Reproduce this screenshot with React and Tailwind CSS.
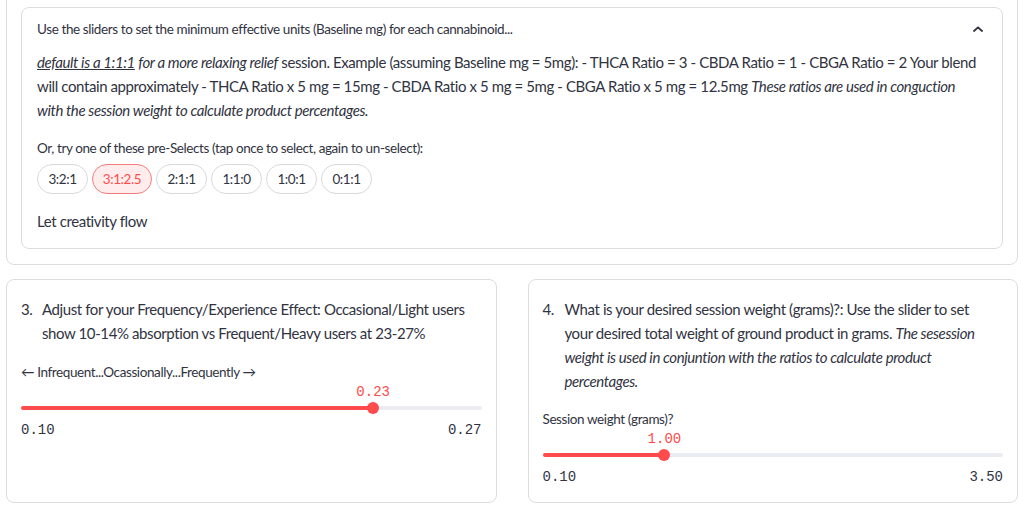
const SANS = "font-['Lato',sans-serif]";
const BODY = "text-[15px] tracking-[-0.4px] leading-[24px]";
const SMALL = "text-[13.5px] tracking-[-0.4px] leading-[21px]";

function Slider({ min, max, value }) {
  const pct = ((value - min) / (max - min)) * 100;
  return (
    <div>
      <div className="relative h-[17px]">
        <span
          className="absolute top-[1px] -translate-x-1/2 whitespace-nowrap font-['Liberation_Mono',monospace] text-[14px] leading-[17px] text-[#ff4b4b]"
          style={{ left: pct + "%" }}
        >
          {value.toFixed(2)}
        </span>
      </div>
      <div className="relative flex h-[15px] items-center">
        <div className="h-[4px] w-full rounded-full bg-[#eaecf1]">
          <div className="h-full rounded-full bg-[#ff4b4b]" style={{ width: pct + "%" }} />
        </div>
        <div
          className="absolute top-1/2 h-[12px] w-[12px] -translate-x-1/2 -translate-y-1/2 rounded-full bg-[#ff4b4b]"
          style={{ left: pct + "%" }}
        />
      </div>
      <div className="mt-[5px] flex justify-between font-['Liberation_Mono',monospace] text-[14px] leading-[21px] text-[#31333f]">
        <span>{min.toFixed(2)}</span>
        <span>{max.toFixed(2)}</span>
      </div>
    </div>
  );
}

function Pill({ children, selected, w }) {
  return (
    <button
      className={
        selected
          ? `flex h-[30px] items-center justify-center rounded-full border border-[#f47c7c] bg-[#ffeded] ${SMALL} text-[#ff4b4b]`
          : `flex h-[30px] items-center justify-center rounded-full border border-[#d9d9dc] bg-white ${SMALL} text-[#31333f]`
      }
      style={{ width: w }}
    >
      {children}
    </button>
  );
}

export default function App() {
  return (
    <div className={`h-[509px] w-[1024px] overflow-hidden bg-white text-[#31333f] ${SANS}`}>
      <div className="-mt-[8px] px-[6px]">
        {/* Top outer container */}
        <div className="rounded-lg border border-[#dcdcdf] px-[14px] pt-[14px] pb-[15px]">
          {/* Expander */}
          <div className="rounded-lg border border-[#dcdcdf]">
            <div className="flex h-[42px] items-center justify-between pl-[15px] pr-[19px]">
              <span className={SMALL}>
                Use the sliders to set the minimum effective units (Baseline mg) for each cannabinoid...
              </span>
              <svg width="10" height="6" viewBox="0 0 10 6" fill="none">
                <path d="M1 5L5 1.3L9 5" stroke="#31333f" strokeWidth="1.8" strokeLinecap="round" strokeLinejoin="round" />
              </svg>
            </div>
            <div className="px-[15px] pb-[15px]">
              <p className={`${BODY} whitespace-nowrap`}>
                <em className="underline">default is a 1:1:1</em> <em>for a more relaxing relief</em> session.
                Example (assuming Baseline mg = 5mg): - THCA Ratio = 3 - CBDA Ratio = 1 - CBGA Ratio = 2 Your blend
                <br />
                will contain approximately - THCA Ratio x 5 mg = 15mg - CBDA Ratio x 5 mg = 5mg - CBGA Ratio x 5 mg =
                12.5mg <em>These ratios are used in conguction</em>
                <br />
                <em>with the session weight to calculate product percentages.</em>
              </p>
              <div className={`mt-[16px] ${SMALL}`}>
                Or, try one of these pre-Selects (tap once to select, again to un-select):
              </div>
              <div className="mt-[5px] flex gap-[4px]">
                <Pill w={51}>3:2:1</Pill>
                <Pill w={60} selected>3:1:2.5</Pill>
                <Pill w={51}>2:1:1</Pill>
                <Pill w={51}>1:1:0</Pill>
                <Pill w={51}>1:0:1</Pill>
                <Pill w={51}>0:1:1</Pill>
              </div>
              <div className={`mt-[15px] ${BODY}`}>Let creativity flow</div>
            </div>
          </div>
        </div>

        {/* Bottom cards */}
        <div className="mt-[14px] grid grid-cols-2 gap-[31px]">
          <div className="rounded-lg border border-[#dcdcdf] px-[14px] pt-[17px] pb-[14px]">
            <div className={`flex ${BODY}`}>
              <span className="w-[21px] shrink-0">3.</span>
              <span className="whitespace-nowrap">
                Adjust for your Frequency/Experience Effect: Occasional/Light users
                <br />
                show 10-14% absorption vs Frequent/Heavy users at 23-27%
              </span>
            </div>
            <div className={`mt-[17px] ${SMALL}`}>← Infrequent...Ocassionally...Frequently →</div>
            <Slider min={0.1} max={0.27} value={0.23} />
          </div>
          <div className="rounded-lg border border-[#dcdcdf] px-[14px] pt-[17px] pb-[14px]">
            <div className={`flex ${BODY}`}>
              <span className="w-[22px] shrink-0">4.</span>
              <span className="whitespace-nowrap">
                What is your desired session weight (grams)?: Use the slider to set
                <br />
                your desired total weight of ground product in grams. <em>The sesession</em>
                <br />
                <em>weight is used in conjuntion with the ratios to calculate product</em>
                <br />
                <em>percentages.</em>
              </span>
            </div>
            <div className={`mt-[16px] ${SMALL}`}>Session weight (grams)?</div>
            <Slider min={0.1} max={3.5} value={1.0} />
          </div>
        </div>
      </div>
    </div>
  );
}
